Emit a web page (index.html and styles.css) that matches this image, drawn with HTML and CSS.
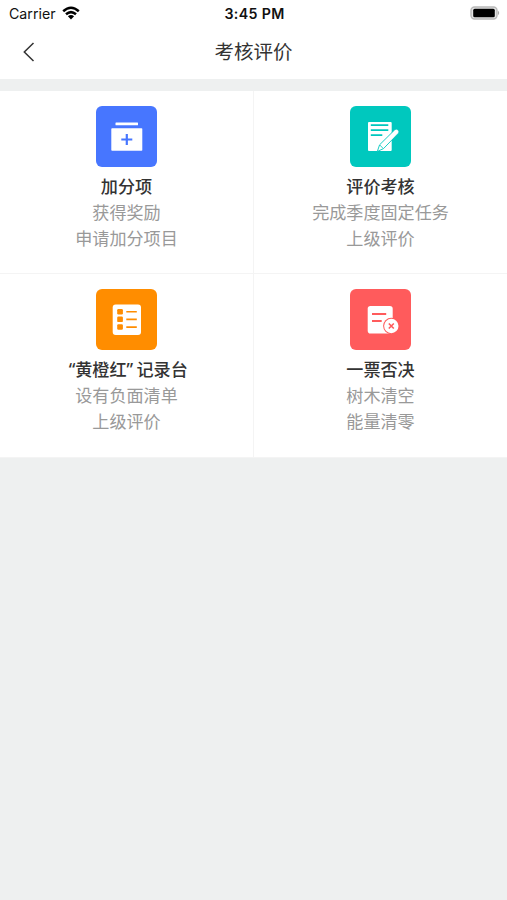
FILE: index.html
```html
<!DOCTYPE html>
<html lang="zh-CN">
<head>
  <meta charset="utf-8">
  <title>考核评价</title>
  <link rel="stylesheet" href="styles.css">
</head>
<body>
  <header class="header">
    <div class="status-bar">
      <div class="carrier">
        <span>Carrier</span>
        <svg class="wifi" viewBox="0 0 18 14">
          <path d="M1.2 5.3 Q9 -1.7 16.8 5.3" />
          <path d="M4 8.3 Q9 3.9 14 8.3" />
          <path class="dot" d="M5.9 10.3 Q9 7.9 12.1 10.3 L9 13.5 Z" />
        </svg>
      </div>
      <div class="time">3:45 PM</div>
      <svg class="battery" viewBox="0 0 30 14">
        <rect x="1" y="1" width="26" height="12" rx="3.5" fill="#e4e4e4" stroke="#b9b9b9" stroke-width="1.4" />
        <rect x="3.2" y="2.7" width="21.6" height="8.6" rx="1.5" fill="#000" />
        <path d="M28 4.8 Q30.4 7 28 9.2 Z" fill="#aaa" />
      </svg>
    </div>
    <div class="nav-bar">
      <svg class="back" viewBox="0 0 12 20">
        <path d="M10.5 1 L1.3 10 L10.5 19" />
      </svg>
      <h1>考核评价</h1>
    </div>
  </header>

  <main class="grid">
    <div class="item">
      <svg class="icon blue" viewBox="0 0 61 61">
        <rect x="19.5" y="16.4" width="22.5" height="2.9" rx="0.5" fill="#fff" />
        <rect x="15.3" y="22.3" width="31" height="22.5" rx="0.8" fill="#fff" />
        <path d="M30.8 28 V39 M25.3 33.5 H36.3" stroke="#4776ff" stroke-width="2.2" />
      </svg>
      <h2>加分项</h2>
      <p>获得奖励</p>
      <p>申请加分项目</p>
    </div>

    <div class="item">
      <svg class="icon teal" viewBox="0 0 61 61">
        <rect x="18" y="16" width="23.7" height="29" rx="1" fill="#fff" />
        <path d="M20.8 19.2 H38.3 M20.8 24.2 H38.3 M20.8 29.2 H32.3" stroke="#00c8be" stroke-width="1.7" />
        <path d="M27.3 45.5 L29.6 38.8 L44.8 23.7 Q46.2 22.3 47.6 23.7 L48.4 24.5 Q49.8 25.9 48.4 27.3 L33.5 42.6 Z" fill="#fff" stroke="#00c8be" stroke-width="0.9" />
        <path d="M29.8 39 L33.2 42.5" stroke="#00c8be" stroke-width="0.8" />
      </svg>
      <h2>评价考核</h2>
      <p>完成季度固定任务</p>
      <p>上级评价</p>
    </div>

    <div class="item">
      <svg class="icon orange" viewBox="0 0 61 61">
        <rect x="16.7" y="15.4" width="28.3" height="30.6" rx="3" fill="#fff" />
        <g fill="#ff8d00">
          <rect x="21.2" y="20" width="5.7" height="5.5" rx="1.2" />
          <rect x="21.2" y="27.6" width="5.7" height="5.5" rx="1.2" />
          <rect x="21.2" y="35.3" width="5.7" height="5.5" rx="1.2" />
        </g>
        <path d="M30.3 22.7 H40.8 M30.3 30.4 H40.8 M30.3 38.1 H40.8" stroke="#ff8d00" stroke-width="1.6" />
      </svg>
      <h2><span class="quote open">“</span>黄橙红<span class="quote">”</span>记录台</h2>
      <p>设有负面清单</p>
      <p>上级评价</p>
    </div>

    <div class="item">
      <svg class="icon red" viewBox="0 0 61 61">
        <rect x="17.7" y="17" width="25" height="27.5" rx="2.8" fill="#fff" />
        <path d="M22 25 H36.2 M22 32 H31.7" stroke="#ff5b5c" stroke-width="1.8" />
        <circle cx="41.3" cy="37" r="8.2" fill="#ff5b5c" />
        <circle cx="41.3" cy="37" r="7.2" fill="#fff" />
        <path d="M38.8 34.5 L43.8 39.5 M43.8 34.5 L38.8 39.5" stroke="#ff5b5c" stroke-width="1.6" />
      </svg>
      <h2>一票否决</h2>
      <p>树木清空</p>
      <p>能量清零</p>
    </div>
  </main>
</body>
</html>
```
FILE: styles.css
```css
* {
  box-sizing: border-box;
}

body {
  margin: 0;
  min-height: 100vh;
  background-color: #eef0f0;
  font-family: "Noto Sans", "Noto Sans CJK SC", sans-serif;
  color: #333;
}

h1, h2, p {
  margin: 0;
}

.header {
  height: 79px;
  background-color: #fff;
}

/* Status bar */
.status-bar {
  display: grid;
  grid-template-columns: 1fr auto 1fr;
  align-items: center;
  height: 27px;
  padding: 0 7px 0 9px;
  font-family: Inter, sans-serif;
  font-size: 14.2px;
  color: #111;
}

.carrier {
  display: flex;
  align-items: center;
  gap: 6px;
}

.wifi {
  width: 18px;
  height: 14px;
  margin-bottom: 2px;
  fill: none;
  stroke: #000;
  stroke-width: 2.5;
}

.wifi .dot {
  fill: #000;
  stroke: none;
}

.time {
  font-weight: 600;
  letter-spacing: 0.35px;
}

.battery {
  width: 30px;
  height: 14px;
  margin-bottom: 2px;
  justify-self: end;
}

/* Title row */
.nav-bar {
  display: grid;
  grid-template-columns: 1fr auto 1fr;
  align-items: center;
  height: 49px;
  padding: 0 23px;
}

.back {
  width: 12px;
  height: 20px;
  fill: none;
  stroke: #333;
  stroke-width: 1.5;
}

.nav-bar h1 {
  font-size: 19.5px;
  font-weight: 400;
  line-height: 28px;
}

/* Entries */
.grid {
  display: grid;
  grid-template-columns: 254px 1fr;
  grid-template-rows: 183px 184px;
  margin-top: 12px;
  background-color: #fff;
}

.item {
  display: flex;
  flex-direction: column;
  align-items: center;
  padding-top: 15px;
  border-bottom: 1px solid #f4f4f4;
}

.item:nth-child(odd) {
  border-right: 1px solid #f4f4f4;
}

.icon {
  width: 61px;
  height: 61px;
  margin-bottom: 7.4px;
  border-radius: 6px;
}

.blue { background-color: #4776ff; }
.teal { background-color: #00c8be; }
.orange { background-color: #ff8d00; }
.red { background-color: #ff5b5c; }

.item h2,
.item p {
  font-size: 17.1px;
  line-height: 25.8px;
}

.item h2 {
  font-weight: 500;
}

.item p {
  color: #999;
}

.quote {
  display: inline-block;
  width: 10px;
}

.quote.open {
  text-align: right;
}
```
